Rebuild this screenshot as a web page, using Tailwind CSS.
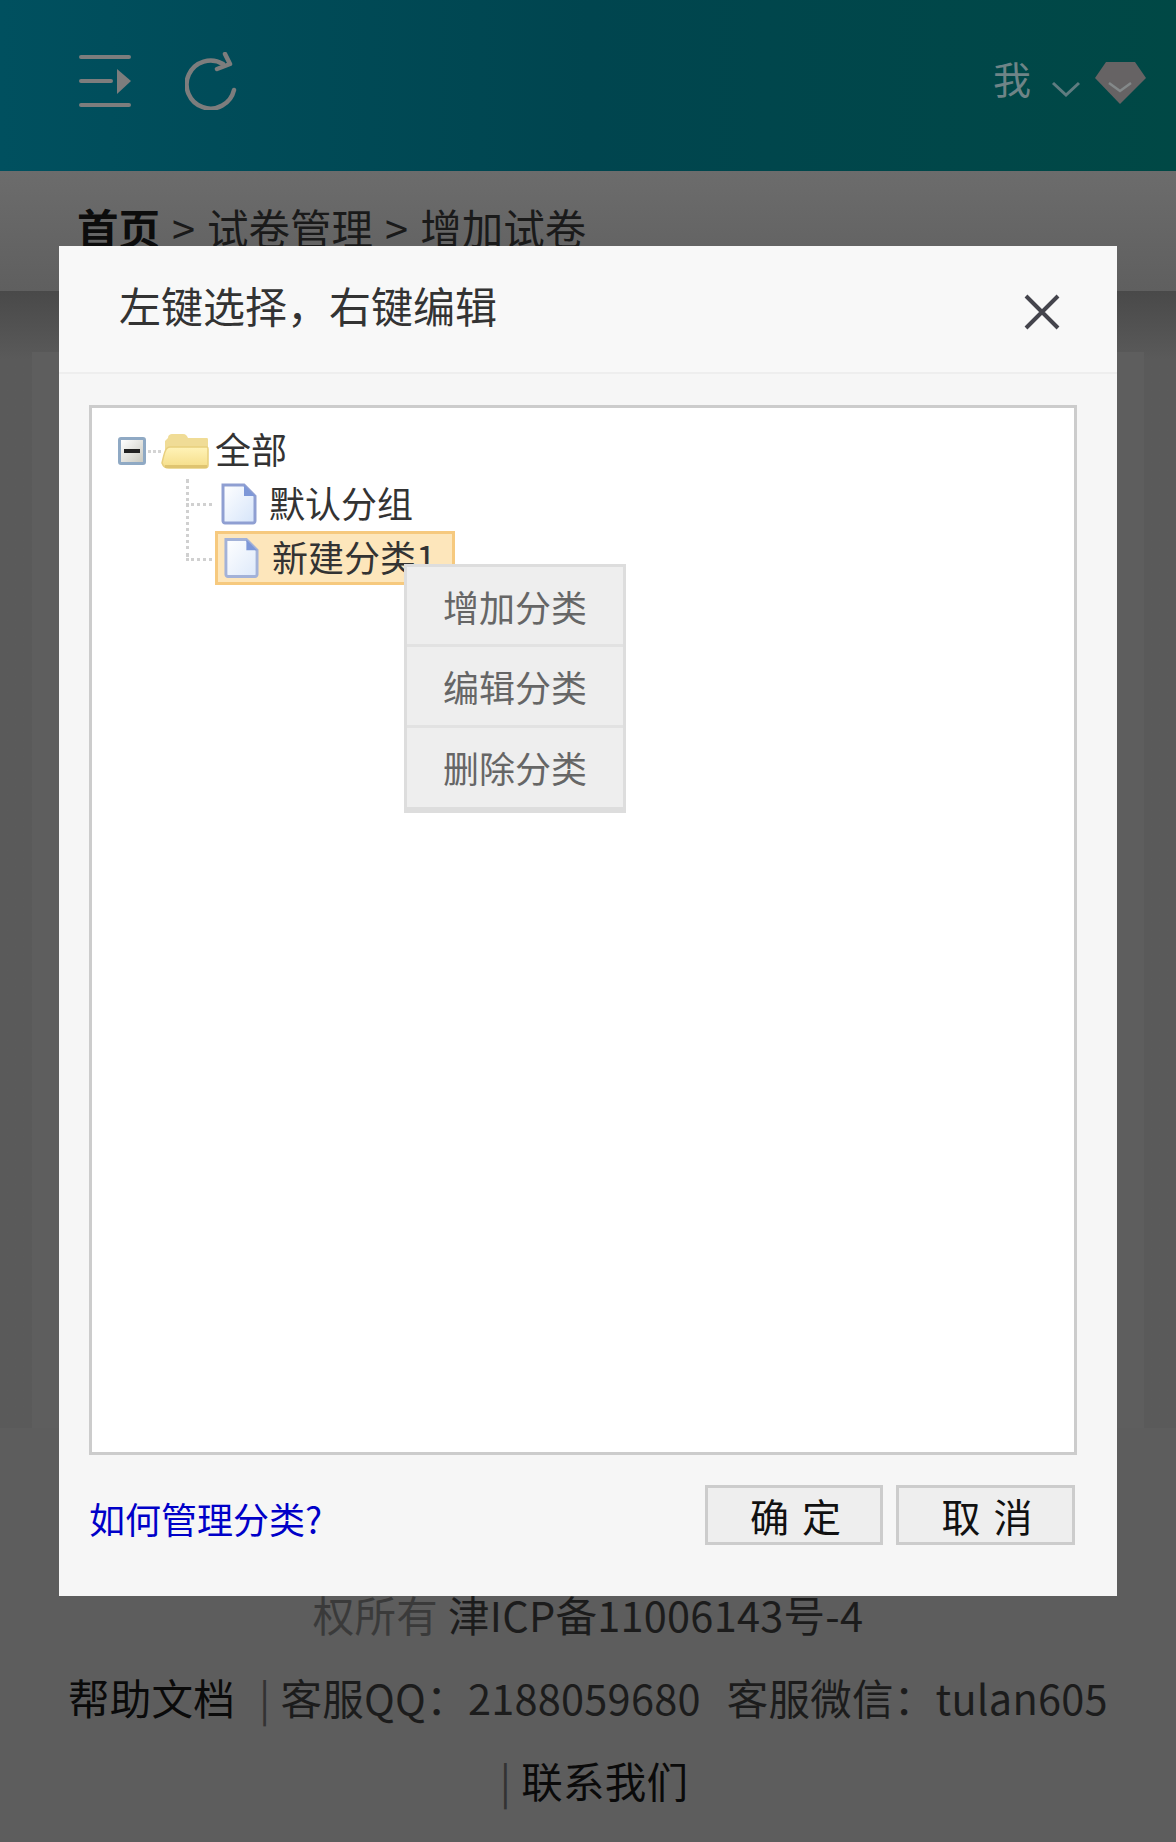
<!DOCTYPE html>
<html lang="zh">
<head>
<meta charset="utf-8">
<script src="https://cdn.jsdelivr.net/npm/@tailwindcss/browser@4"></script>
</head>
<body class="bg-[#5d5d5d]">
<div class="relative w-[1176px] h-[1842px] overflow-hidden font-['Noto_Sans_CJK_SC','Noto_Sans',sans-serif] bg-[#5d5d5d]">
  <!-- page under the overlay -->
  <header class="h-[171px] flex items-start justify-between bg-gradient-to-r from-[#00505f] via-[#00454f] to-[#004845]">
    <div class="flex items-start pl-[79px] pt-[53px] gap-[53px]">
      <svg class="w-[53px] h-[56px]" viewBox="0 0 53 56" fill="none"><path d="M2 4H50M2 28H32M2 52H50" stroke="#7d7d7d" stroke-width="4" stroke-linecap="round"/><path d="M38 16L52 28L38 41Z" fill="#7d7d7d"/></svg>
      <svg class="-mt-[1px] w-[52px] h-[58px]" viewBox="0 0 52 58" fill="none"><path d="M49 38A24 24 0 1 1 38 12" stroke="#7d7d7d" stroke-width="4.5" stroke-linecap="round"/><path d="M40 2L45 12L32 17" stroke="#7d7d7d" stroke-width="4.5" stroke-linecap="round" stroke-linejoin="round"/></svg>
    </div>
    <div class="flex items-start pt-[55px] pr-[29px]">
      <span class="text-[38px] leading-[46px] text-[#6f8487]">我</span>
      <svg class="ml-[20px] mt-[25px] w-[30px] h-[18px]" viewBox="0 0 30 18" fill="none"><path d="M2 3L15 15L28 3" stroke="#5f7c80" stroke-width="3"/></svg>
      <svg class="ml-[13px] mt-[6px] w-[53px] h-[44px]" viewBox="0 0 53 44"><path d="M12 1H41L52 17L26 43L1 17Z" fill="#666364"/><path d="M15 22L26 30L37 22" fill="none" stroke="#84898a" stroke-width="2.5"/></svg>
    </div>
  </header>
  <div class="h-[120px] pl-[77px] pt-[28px] flex items-start gap-[12px] text-[41.5px] leading-[56px] text-[#1a1a1a] bg-gradient-to-b from-[#6c6c6c] to-[#5f5f5f] whitespace-nowrap"><b class="font-bold text-[#0c0c0c]">首页</b><span>&gt;</span><span>试卷管理</span><span>&gt;</span><span>增加试卷</span></div>
  <main class="h-[1137px] pt-[61px] px-[32px] bg-gradient-to-b from-[#494949] via-[#5a5a5a] via-6% to-[#5a5a5a]">
    <div class="h-[1076px] bg-[#5e5e5e]"></div>
  </main>
  <footer class="text-[41.5px] leading-[83px] tracking-[0.25px] text-[#1c1c1c] whitespace-nowrap pt-[145px]">
    <p class="flex justify-center"><span class="text-[#3a3a3a]">权所有</span><span class="ml-[10px]">津ICP备11006143号-4</span></p>
    <p class="flex justify-center"><span class="text-[#0a0a0a]">帮助文档</span><span class="ml-[24px] text-[#333]">|</span><span class="ml-[10px]">客服QQ：2188059680</span><span class="ml-[26px]">客服微信：tulan605</span></p>
    <p class="flex justify-center pl-[12px]"><span class="text-[#333]">|</span><span class="ml-[10px] text-[#0a0a0a]">联系我们</span></p>
  </footer>

  <!-- dialog -->
  <section class="absolute left-[59px] top-[246px] w-[1058px] h-[1350px] bg-[#f6f6f6] flex flex-col">
    <div class="h-[128px] shrink-0 border-b-2 border-[#eeeeee] bg-[#f8f8f8] flex items-start justify-between pl-[60px] pr-[56px] pt-[31px]">
      <h1 class="text-[42px] leading-[56px] font-normal text-[#333] whitespace-nowrap">左键选择，右键编辑</h1>
      <svg class="mt-[16px] w-[38px] h-[38px]" viewBox="0 0 38 38" fill="none"><path d="M3 3L35 35M35 3L3 35" stroke="#44444c" stroke-width="4"/></svg>
    </div>
    <div class="mx-[30px] mt-[31px] w-[988px] h-[1050px] shrink-0 border-[3px] border-[#cccccc] bg-white pl-[26px] pt-[20px] text-[36px] text-[#333]">
      <div class="h-[46px] flex items-center">
        <span class="w-[28px] h-[28px] rounded-[3px] border-[3px] border-[#8fa9c4] bg-gradient-to-br from-white to-[#c9c9c0] flex items-center justify-center"><span class="block w-[16px] h-[4px] bg-[#222]"></span></span>
        <span class="ml-[2px] w-[13px] border-t-[3px] border-dotted border-[#d4d4d4]"></span>
        <svg class="w-[48px] h-[36px]" viewBox="0 0 48 36"><defs><linearGradient id="f" x1="0" y1="0" x2="0" y2="1"><stop offset="0" stop-color="#fff3b8"/><stop offset="1" stop-color="#f5dd88"/></linearGradient></defs><path d="M7 5C7 2 9 1 11 1H22C25 1 26 3 27 5H46C47 5 47 6 47 8V32C47 34 46 35 44 35H8C5 35 4 34 4 31V8Z" fill="#f0dc96"/><path d="M9 14H46C47 14 47 15 47 16V32C47 34 46 35 44 35H8C4 35 2 33 1 30C3 22 4 14 9 14Z" fill="url(#f)" stroke="#e8cf7e" stroke-width="1.5"/><path d="M4 33.5H46" stroke="#dfc470" stroke-width="3"/></svg>
        <span class="ml-[6px] leading-[46px] pb-[6px]">全部</span>
      </div>
      <ul class="relative ml-[68px] mt-[3px] w-[400px]">
        <li class="h-[54px] flex items-center relative pl-[34px]">
          <span class="absolute left-0 top-[26px] w-[26px] border-t-[3px] border-dotted border-[#d0d0d0]"></span>
          <svg class="w-[37px] h-[42px]" viewBox="0 0 37 42"><defs><linearGradient id="d" x1="0" y1="0" x2="1" y2="1"><stop offset="0" stop-color="#ffffff"/><stop offset="1" stop-color="#d5e4fa"/></linearGradient></defs><path d="M3 2H24L35 13V38C35 39 34 40 33 40H5C4 40 3 39 3 38Z" fill="url(#d)" stroke="#8f9fd2" stroke-width="3"/><path d="M24 2V13H35Z" fill="#7d97d8"/></svg>
          <span class="ml-[12px] pb-[4px] whitespace-nowrap">默认分组</span>
        </li>
        <li class="h-[54px] flex items-center relative pl-[29px] w-[269px]">
          <span class="absolute left-0 top-[27px] w-[26px] border-t-[3px] border-dotted border-[#d0d0d0]"></span>
          <div class="absolute left-[29px] top-0 w-[240px] h-[54px] border-[3px] border-[#f6c97e] bg-[#fde6bb]"></div>
          <svg class="relative ml-[8px] w-[36px] h-[42px]" viewBox="0 0 37 42"><defs><linearGradient id="e" x1="0" y1="0" x2="1" y2="1"><stop offset="0" stop-color="#ffffff"/><stop offset="1" stop-color="#dde9fa"/></linearGradient></defs><path d="M3 2H24L35 13V38C35 39 34 40 33 40H5C4 40 3 39 3 38Z" fill="url(#e)" stroke="#a3b2d8" stroke-width="3"/><path d="M24 2V13H35Z" fill="#7d97d8"/></svg>
          <span class="relative ml-[13px] pb-[4px] whitespace-nowrap">新建分类1</span>
        </li>
        <span class="absolute left-0 top-[2px] h-[78px] border-l-[3px] border-dotted border-[#d0d0d0]"></span>
      </ul>
    </div>
    <div class="mx-[30px] mt-[30px] flex items-start justify-between pr-[12px]">
      <a class="mt-[6px] text-[36px] leading-[54px] text-[#0000c8] whitespace-nowrap">如何管理分类?</a>
      <div class="flex gap-[13px]">
        <button class="w-[178px] h-[60px] border-[3px] border-[#cccccc] bg-[#eeeeee] text-[39px] leading-[54px] text-[#111] tracking-[13px] pl-[16px] pr-0 text-center whitespace-nowrap">确定</button>
        <button class="w-[179px] h-[60px] border-[3px] border-[#cccccc] bg-[#eeeeee] text-[39px] leading-[54px] text-[#111] tracking-[13px] pl-[16px] pr-0 text-center whitespace-nowrap">取消</button>
      </div>
    </div>
  </section>

  <!-- context menu -->
  <div class="absolute left-[404px] top-[564px] w-[222px] h-[249px] border-[3px] border-b-[6px] border-[#dddddd] bg-[#eeeeee] text-center text-[36px] text-[#666]">
    <div class="h-[80px] border-b-[3px] border-[#e2e2e2] leading-[78px]">增加分类</div>
    <div class="h-[81px] border-b-[3px] border-[#e2e2e2] leading-[78px]">编辑分类</div>
    <div class="h-[78px] leading-[78px]">删除分类</div>
  </div>
</div>
</body>
</html>
